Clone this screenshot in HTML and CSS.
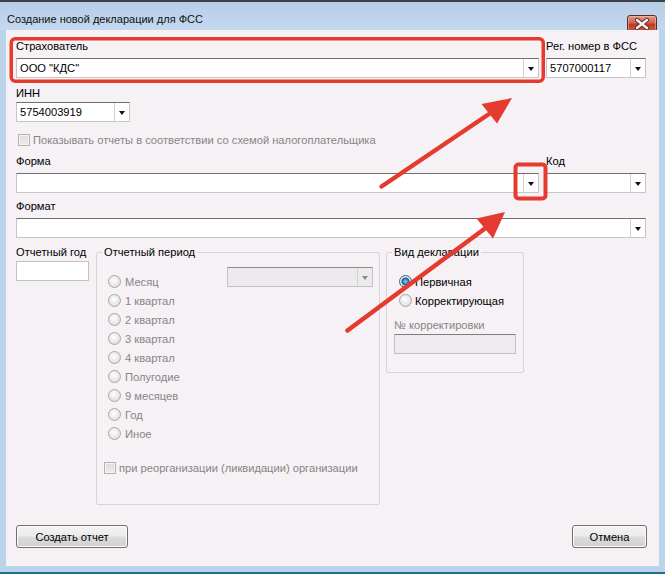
FILE: index.html
```html
<!DOCTYPE html>
<html lang="ru">
<head>
<meta charset="utf-8">
<title>Создание новой декларации для ФСС</title>
<link rel="stylesheet" href="styles.css">
</head>
<body>
<div class="window">
  <div class="titlebar">
    <span class="title">Создание новой декларации для ФСС</span>
    <div class="close">
      <svg width="28" height="14" viewBox="0 0 28 14">
        <path d="M9 3 L19 11 M19 3 L9 11" stroke="#5a2a2a" stroke-width="4.2" stroke-linecap="round"/>
        <path d="M9 3 L19 11 M19 3 L9 11" stroke="#f4f4f4" stroke-width="2.4" stroke-linecap="round"/>
      </svg>
    </div>
  </div>
  <div class="frame">
    <div class="content">
      <div class="row row-a">
        <div class="field wide">
          <div class="lbl">Страхователь</div>
          <div class="combo"><span class="val">ООО "КДС"</span><span class="drop"></span></div>
        </div>
        <div class="field narrow">
          <div class="lbl">Рег. номер в ФСС</div>
          <div class="combo"><span class="val">5707000117</span><span class="drop"></span></div>
        </div>
      </div>

      <div class="field inn">
        <div class="lbl tight">ИНН</div>
        <div class="combo"><span class="val">5754003919</span><span class="drop"></span></div>
      </div>

      <div class="check-row show-row">
        <span class="cb"></span><span class="dim">Показывать отчеты в соответствии со схемой налогоплательщика</span>
      </div>

      <div class="row forma-row">
        <div class="field wide">
          <div class="lbl">Форма</div>
          <div class="combo"><span class="val"></span><span class="drop"></span></div>
        </div>
        <div class="field narrow">
          <div class="lbl">Код</div>
          <div class="combo"><span class="val"></span><span class="drop"></span></div>
        </div>
      </div>

      <div class="field format">
        <div class="lbl">Формат</div>
        <div class="combo"><span class="val"></span><span class="drop"></span></div>
      </div>

      <div class="row period-row">
        <div class="field year">
          <div class="lbl tight">Отчетный год</div>
          <div class="input"></div>
        </div>

        <fieldset class="group period">
          <legend>Отчетный период</legend>
          <div class="period-top">
            <div class="radios">
              <div class="radio-row"><span class="radio"></span><span class="dim">Месяц</span></div>
              <div class="radio-row"><span class="radio"></span><span class="dim">1 квартал</span></div>
              <div class="radio-row"><span class="radio"></span><span class="dim">2 квартал</span></div>
              <div class="radio-row"><span class="radio"></span><span class="dim">3 квартал</span></div>
              <div class="radio-row"><span class="radio"></span><span class="dim">4 квартал</span></div>
              <div class="radio-row"><span class="radio"></span><span class="dim">Полугодие</span></div>
              <div class="radio-row"><span class="radio"></span><span class="dim">9 месяцев</span></div>
              <div class="radio-row"><span class="radio"></span><span class="dim">Год</span></div>
              <div class="radio-row"><span class="radio"></span><span class="dim">Иное</span></div>
            </div>
            <div class="combo disabled month"><span class="val"></span><span class="drop"></span></div>
          </div>
          <div class="check-row reorg-row">
            <span class="cb"></span><span class="dim">при реорганизации (ликвидации) организации</span>
          </div>
        </fieldset>

        <fieldset class="group decl">
          <legend>Вид декларации</legend>
          <div class="radios decl-radios">
            <div class="radio-row"><span class="radio on"></span><span>Первичная</span></div>
            <div class="radio-row"><span class="radio"></span><span>Корректирующая</span></div>
          </div>
          <div class="lbl tight dim corr-lbl">№ корректировки</div>
          <div class="input disabled corr-input"></div>
        </fieldset>
      </div>

      <div class="buttons">
        <button class="btn create" type="button">Создать отчет</button>
        <button class="btn cancel" type="button">Отмена</button>
      </div>
    </div>
  </div>
  <div class="bottom"></div>

  <svg class="annot" width="665" height="574" viewBox="0 0 665 574">
    <rect x="11.25" y="38.75" width="532" height="42.5" rx="4" fill="none" stroke="#e53a2f" stroke-width="3.5"/>
    <rect x="515.5" y="164.5" width="30" height="34" rx="3" fill="none" stroke="#e53a2f" stroke-width="4"/>
    <line x1="381.5" y1="186.5" x2="492" y2="112" stroke="#e53a2f" stroke-width="4.5" stroke-linecap="round"/>
    <polygon points="512,98 481.5,104 497,123.5" fill="#e53a2f"/>
    <line x1="347.5" y1="330.5" x2="487" y2="227" stroke="#e53a2f" stroke-width="4.5" stroke-linecap="round"/>
    <polygon points="505,212 476.5,218.5 493,238.5" fill="#e53a2f"/>
  </svg>
</div>
</body>
</html>
```

FILE: styles.css
```css
* { box-sizing: border-box; }

html, body { margin: 0; padding: 0; }

body {
  width: 665px;
  height: 574px;
  overflow: hidden;
  font-family: "Liberation Sans", Arial, sans-serif;
  font-size: 11.15px;
  color: #000;
  background: #bcd3ec;
}

.window {
  position: relative;
  width: 665px;
  height: 574px;
  display: flex;
  flex-direction: column;
  background: #bcd3ec;
}

/* title bar */
.titlebar {
  flex: none;
  height: 30px;
  border-top: 2px solid #3d4148;
  display: flex;
  align-items: center;
  padding: 5px 0 0 7px;
  background: linear-gradient(#b7cee9, #c4d8ee);
}
.title { color: #111; white-space: nowrap; font-size: 11px; }
.close {
  margin-left: auto;
  margin-right: 8px;
  align-self: flex-start;
  margin-top: 8px;
  width: 30px;
  height: 17px;
  border: 1px solid #5e2b2b;
  border-radius: 3px;
  display: flex;
  align-items: center;
  justify-content: center;
  background: linear-gradient(#e29886 0%, #d0644e 45%, #bd3a23 55%, #c9583f 100%);
  box-shadow: inset 0 0 0 1px rgba(255, 210, 200, 0.45);
}
.close svg { display: block; }

.frame {
  flex: 1;
  display: flex;
  padding: 0 6px;
}
.content {
  flex: 1;
  display: flex;
  flex-direction: column;
  background: #f5f1f5;
  padding: 9px 13px 18px 10px;
}
.bottom {
  flex: none;
  height: 8px;
  border-bottom: 2px solid #1d6f8e;
}

/* rows & fields */
.row { display: flex; }
.row-a, .forma-row { gap: 7px; }
.field { display: flex; flex-direction: column; }
.wide { width: 523px; }
.narrow { width: 100px; }
.inn { width: 114px; margin-top: 8px; }
.forma-row { margin-top: 7px; }
.format { margin-top: 6px; width: 630px; }
.period-row { margin-top: 7px; align-items: flex-start; }
.year { width: 73px; }

.lbl {
  height: 15px;
  line-height: 15px;
  margin-bottom: 4px;
  white-space: nowrap;
}
.lbl.tight { margin-bottom: 1px; }

.dim { color: #868686; }

/* combo */
.combo {
  display: flex;
  height: 20px;
  border: 1px solid #c6c6c6;
  border-top-color: #6f6f6f;
  background: #fff;
}
.combo .val {
  flex: 1;
  padding-left: 3px;
  line-height: 18px;
  white-space: nowrap;
  overflow: hidden;
}
.combo .drop {
  flex: none;
  width: 15px;
  border-left: 1px solid #cfcfcf;
  display: flex;
  align-items: center;
  justify-content: center;
}
.combo .drop::after {
  content: "";
  width: 0;
  height: 0;
  border-left: 3.5px solid transparent;
  border-right: 3.5px solid transparent;
  border-top: 4px solid #111;
  margin-top: 1px;
}
.combo.disabled {
  background: #edeaed;
  border-color: #c2c2c2;
  border-top-color: #8c8c8c;
}
.combo.disabled .drop { border-left-color: #d2d2d2; }
.combo.disabled .drop::after { border-top-color: #8a8a8a; }

.input {
  height: 20px;
  background: #fff;
  border: 1px solid #c2c2c2;
}
.input.disabled {
  background: #efeaef;
  border-color: #c2c2c2;
  border-top-color: #7e7e7e;
}

/* checkboxes */
.check-row {
  display: flex;
  align-items: center;
  height: 15px;
  white-space: nowrap;
}
.cb {
  flex: none;
  width: 12px;
  height: 12px;
  border: 1px solid #b2b2b2;
  background: linear-gradient(#dcdcdc, #ececec);
  box-shadow: inset 0 0 0 1px #f3f3f3;
  margin-right: 3px;
}
.show-row { margin-top: 10px; padding-left: 2px; }
.reorg-row { margin-top: 17px; padding-left: 7px; }

/* group boxes */
.group {
  margin: 0;
  padding: 0;
  min-width: 0;
  border: 1px solid #d8d3d8;
  border-radius: 2px;
}
.group legend {
  padding: 0 2px;
  margin-left: 5px;
  line-height: 15px;
  height: 15px;
}
.period {
  width: 284px;
  height: 260px;
  margin-left: 7px;
}
.decl {
  width: 138px;
  height: 128px;
  margin-left: 6px;
}

.period-top { display: flex; align-items: flex-start; }
.radios { margin-top: 12px; padding-left: 11px; }
.decl-radios { padding-left: 12px; }
.radio-row {
  display: flex;
  align-items: center;
  height: 19px;
  white-space: nowrap;
}
.radio {
  flex: none;
  width: 13px;
  height: 13px;
  border-radius: 50%;
  border: 1px solid #a8a8a8;
  background: radial-gradient(circle at 45% 40%, #ffffff 0%, #ececec 45%, #d2d2d2 100%);
  margin-right: 4px;
}
.radio.on {
  border-color: #45617c;
  background: radial-gradient(circle at 50% 50%, #8fd3f7 0px, #3b93d0 2px, #1c5d96 3.5px, #dfe6ec 4.5px, #cfd8e0 100%);
}
.decl .radio { margin-right: 3px; }

.month {
  width: 146px;
  margin-top: 7px;
  margin-left: auto;
  margin-right: 6px;
}

.corr-lbl { margin-top: 8px; padding-left: 7px; }
.corr-input { width: 122px; margin-left: 7px; }

/* buttons */
.buttons {
  margin-top: auto;
  display: flex;
  justify-content: space-between;
  margin-right: -1px;
}
.btn {
  height: 23px;
  padding: 0;
  font-family: "Liberation Sans", Arial, sans-serif;
  font-size: 11.15px;
  color: #000;
  border: 1px solid #707070;
  border-radius: 3px;
  background: linear-gradient(#f3f3f3 0%, #ebebeb 48%, #dddddd 52%, #cfcfcf 100%);
  box-shadow: inset 0 0 0 1px #fbfbfb;
}
.create { width: 112px; }
.cancel { width: 75px; }

/* annotation overlay */
.annot {
  position: absolute;
  left: 0;
  top: 0;
  pointer-events: none;
}
```
